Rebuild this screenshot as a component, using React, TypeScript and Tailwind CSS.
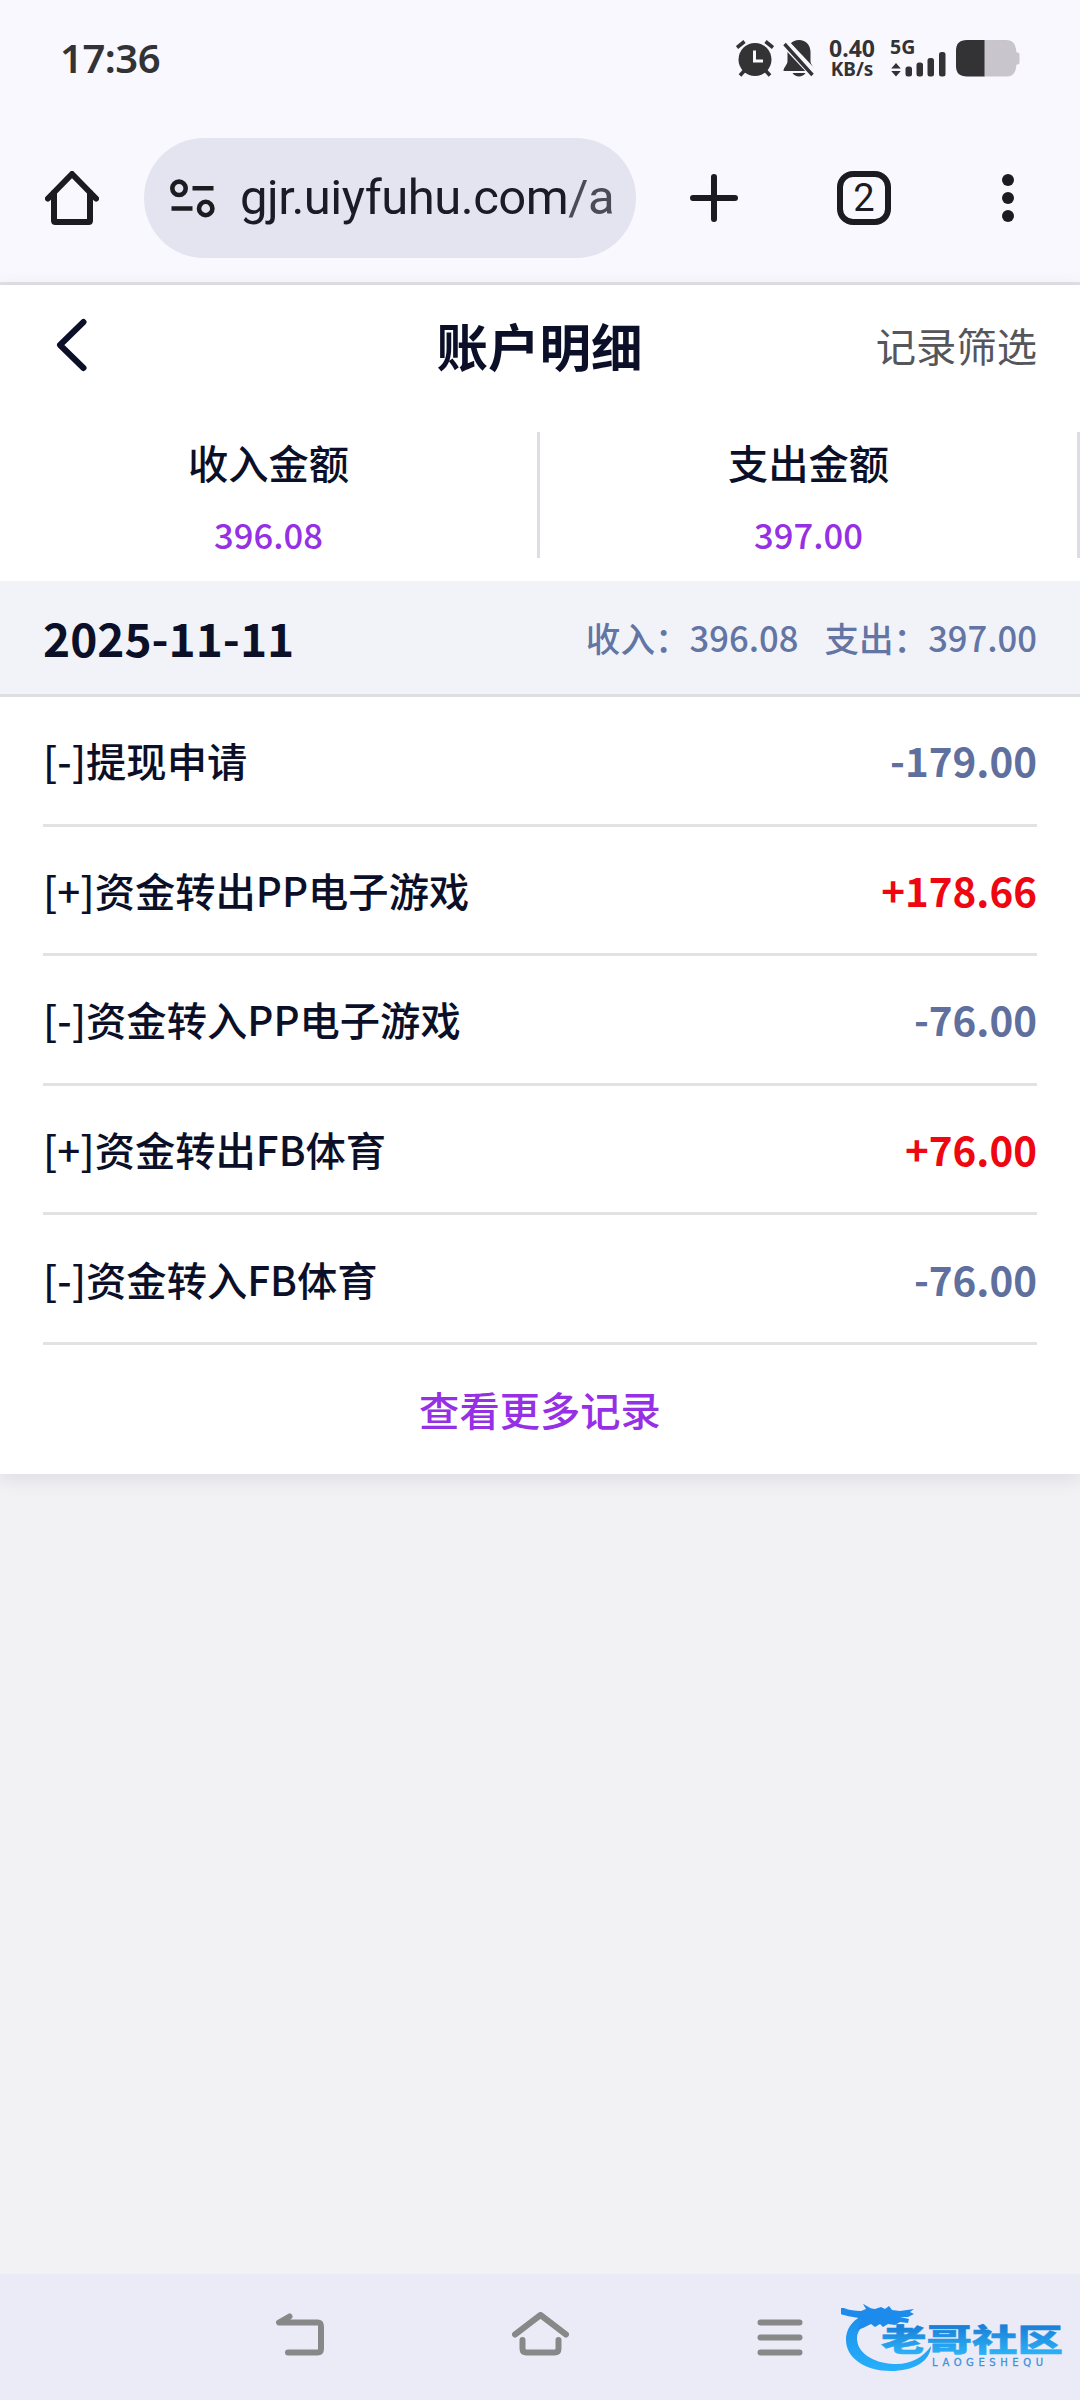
type RecordItem = {
  id: number;
  title: string;
  amount: string;
};

const records: RecordItem[] = [
  { id: 1, title: "[-]提现申请", amount: "-179.00" },
  { id: 2, title: "[+]资金转出PP电子游戏", amount: "+178.66" },
  { id: 3, title: "[-]资金转入PP电子游戏", amount: "-76.00" },
  { id: 4, title: "[+]资金转出FB体育", amount: "+76.00" },
  { id: 5, title: "[-]资金转入FB体育", amount: "-76.00" },
];

const totals = [
  { label: "收入金额", value: "396.08" },
  { label: "支出金额", value: "397.00" },
];

const StatusBar = () => (
  <div className="flex h-[120px] items-start justify-between px-[60px] pt-10 font-['Noto_Sans',sans-serif] text-[#333335]">
    <span className="-mt-[4px] text-[40px] font-semibold leading-[44px] tracking-[-0.5px]">17:36</span>
    <div className="flex items-start">
      {/* alarm */}
      <svg width="38" height="37" viewBox="0 0 38 37" fill="none" stroke="currentColor" strokeWidth="3.6">
        <circle cx="19" cy="19.5" r="16.5" fill="currentColor" stroke="none" />
        <path d="M1 7.5L8.5 1.5M37 7.5L29.5 1.5M4 35.5L9 30M34 35.5L29 30" />
        <path d="M18.5 10.5V21H27" stroke="#f9f8fe" strokeWidth="3" />
      </svg>
      {/* muted bell */}
      <svg className="ml-[9px]" width="32" height="37" viewBox="0 0 32 37" fill="currentColor">
        <path d="M16 0c7 0 11.500 5 11.500 12v9c0 4 4 6 4 10H.5c0-4 4-6 4-10v-9C4.500 5 9 0 16 0z" />
        <path d="M9.500 33h13c-2.500 4.500-10.500 4.500-13 0z" />
        <path d="M0 1L31 34" stroke="#f9f8fe" strokeWidth="8.500" />
        <path d="M1.500 4L29.500 35" stroke="currentColor" strokeWidth="3.400" />
      </svg>
      <div className="-mt-[3px] ml-[13px] flex w-12 flex-col items-center font-bold">
        <span className="text-[23px] leading-[22px]">0.40</span>
        <span className="text-[19px] leading-[20px]">KB/s</span>
      </div>
      {/* signal */}
      <div className="ml-[14px] flex h-[37px] w-[56px] items-end">
        <div className="-mt-px flex h-[38px] w-[15px] flex-col justify-between">
          <span className="-mt-[2px] text-[19.500px] font-bold leading-[20px]">5G</span>
          <svg width="12" height="15" viewBox="0 0 12 15" fill="currentColor">
            <path d="M6 1l4.800 5.500H1.200zM6 14.500l4.800-5.500H1.200z" />
          </svg>
        </div>
        <svg width="41" height="26" viewBox="0 0 41 26" fill="currentColor">
          <rect x="0.500" y="15.500" width="6.500" height="10" rx="2.500" />
          <rect x="11.500" y="11.500" width="6.500" height="14" rx="2.500" />
          <rect x="22.500" y="7" width="6.500" height="18.500" rx="2.500" />
          <rect x="34" y="1" width="6.500" height="24.500" rx="2.500" />
        </svg>
      </div>
      {/* battery */}
      <svg className="ml-[10px]" width="64" height="37" viewBox="0 0 64 37">
        <path d="M28 0h22c6 0 9 3 10 9l.5 3.500h1c1.500 0 2 1 2 2v8c0 1-.5 2-2 2h-1L60 28c-1 6-4 8.500-10 8.500H28z" fill="#c8c5cc" />
        <path d="M28.500 0v36.500H11C3.500 36.500 0 33 0 26V10.500C0 3.500 3.500 0 11 0z" fill="#333335" />
      </svg>
    </div>
  </div>
);

const BrowserBar = () => (
  <div className="flex h-[165px] items-start border-b-[3px] border-[#e2e1e7] pl-[45px] pt-[18px] text-[#1b1b21]">
    <svg className="mt-[33px]" width="54" height="54" viewBox="0 0 54 54" fill="none" stroke="currentColor" strokeWidth="6" strokeLinecap="round" strokeLinejoin="round">
      <path d="M3 27.500L27 3l24 24.500" />
      <path d="M9 22v27.500q0 1.500 1.500 1.500h33q1.500 0 1.500-1.500V22" />
    </svg>
    <div className="ml-[45px] flex h-[120px] w-[492px] items-center rounded-full bg-[#e4e4f0] pl-[26px]">
      <svg width="45" height="39" viewBox="0 0 45 39" fill="none" stroke="currentColor" strokeWidth="4.600">
        <circle cx="9" cy="9.300" r="6.700" />
        <path d="M22.500 9.300H43.500M1.500 29.500H22.500" />
        <circle cx="35.700" cy="29.500" r="6.700" />
      </svg>
      <div className="ml-[25px] whitespace-nowrap font-[Roboto,sans-serif] text-[49px] leading-[60px] tracking-[-0.5px] text-[#1b1b25]">
        gjr.uiyfuhu.com<span className="text-[#4b4a55]">/a</span>
      </div>
    </div>
    <svg className="ml-[54px] mt-9" width="48" height="48" viewBox="0 0 48 48" stroke="currentColor" strokeWidth="6" strokeLinecap="round">
      <path d="M24 3v42M3 24h42" />
    </svg>
    <div className="ml-[99px] mt-[33px] flex h-[54px] w-[54px] items-center justify-center rounded-2xl border-[6px] border-[#1b1b21] font-[Roboto,sans-serif] text-[38px] leading-none">
      2
    </div>
    <svg className="ml-[111px] mt-9" width="12" height="48" viewBox="0 0 12 48" fill="currentColor">
      <circle cx="6" cy="6" r="6" />
      <circle cx="6" cy="24" r="6" />
      <circle cx="6" cy="42" r="6" />
    </svg>
  </div>
);

const NavBar = () => (
  <div className="flex h-[126px] items-start bg-[#ebebf7] pl-[276px] pt-[38px] text-[#888889]">
    <svg width="49" height="45" viewBox="0 0 49 45" fill="none" stroke="currentColor" strokeWidth="6" strokeLinecap="round" strokeLinejoin="round">
      <path d="M13.500 4.500L3 10.500h38.500q3.500 0 3.500 4v22q0 4-3.500 4H12" />
      <path d="M12 7L6 10h6z" fill="currentColor" strokeWidth="2" />
    </svg>
    <svg className="ml-[187px]" width="57" height="45" viewBox="0 0 57 45" fill="none" stroke="currentColor" strokeWidth="6" strokeLinecap="round" strokeLinejoin="round">
      <path d="M3 22.500L28.500 3 54 22.500" />
      <path d="M10.500 28v8.500q0 4 4 4h28q4 0 4-4V28" />
    </svg>
    <svg className="ml-[188px]" width="46" height="45" viewBox="0 0 46 45" stroke="currentColor" strokeWidth="6" strokeLinecap="round">
      <path d="M3.500 10.500h39M3.500 25.500h39M3.500 40.500h39" />
    </svg>
    <svg className="-mt-2 ml-[38px]" width="224" height="72" viewBox="0 0 224 72">
      <defs>
        <linearGradient id="ring" x1="0" y1="0" x2="0" y2="1">
          <stop offset="0" stopColor="#1a8cec" />
          <stop offset="1" stopColor="#27b0fa" />
        </linearGradient>
        <linearGradient id="word" x1="0" y1="0" x2="0" y2="1">
          <stop offset="0.250" stopColor="#1a80d8" />
          <stop offset="0.900" stopColor="#2db4f8" />
        </linearGradient>
      </defs>
      {/* dragon body */}
      <path
        d="M32 8C14 12 5 23 5 36c0 18 19 31 45 31 22 0 39-9 40-25-8 12-22 19-37 18-21-1-37-11-37-26 0-9 9-17 23-21z"
        fill="url(#ring)"
      />
      {/* dragon head and whiskers */}
      <path
        d="M3 4c5 2.500 11 2.500 17 3l5-2-3-5c5 2 7 5 12 5l6-2 4 2 4-3 3 4 8 1 14-2-4 3 4 2-6 3-8 0 9 2-1 4-8-1-5 3-7-1-5 3-3-3-5 3-4-3-8 4-6 2 5-11c-6-2-12-2-18-4-3 0-5-2-6-7z"
        fill="#1c8bec"
      />
      <text
        x="40"
        y="47"
        fontSize="31"
        fontWeight="900"
        textLength="182"
        lengthAdjust="spacingAndGlyphs"
        fill="url(#word)"
        stroke="url(#word)"
        strokeWidth="0.500"
        className="font-['Noto_Sans_CJK_SC',sans-serif]"
      >
        老哥社区
      </text>
      <text x="91" y="61.500" fontSize="10" textLength="111" fill="#3c93dc" stroke="#3c93dc" strokeWidth="0.300" className="font-['DejaVu_Sans',sans-serif]">
        LAOGESHEQU
      </text>
    </svg>
  </div>
);

const App = () => {
  return (
    <div className="flex h-[2400px] w-[1080px] flex-col overflow-hidden bg-[#f2f2f4] font-['Noto_Sans_CJK_SC',sans-serif] text-[#0b1028]">
      <div className="bg-[#f9f8fe]">
        <StatusBar />
        <BrowserBar />
      </div>

      <div className="bg-white shadow-[0_4px_18px_rgba(80,85,130,0.14)]">
        <div className="flex h-[124px] items-center justify-between pb-1 pl-[56px] pr-[43px]">
          <div className="flex w-[147px]">
            <svg width="32" height="54" viewBox="0 0 32 54" fill="none" stroke="currentColor" strokeWidth="6" strokeLinecap="round" strokeLinejoin="round">
              <path d="M27.500 4L4 27l23.500 23" />
            </svg>
          </div>
          <h1 className="text-[51.500px] font-bold leading-none">账户明细</h1>
          <span className="text-[40.300px] leading-none text-[#55565c]">记录筛选</span>
        </div>

        <div className="flex h-[172px] pt-[23px]">
          {totals.map((item) => (
            <div key={item.label} className="flex h-[126px] flex-1 flex-col items-center border-r-[3px] border-[#dcdee6] pt-[10px]">
              <span className="text-[40.300px] font-medium leading-[40px]">{item.label}</span>
              <span className="mt-[34px] text-[34.600px] font-medium leading-[36px] text-[#9630e4]">{item.value}</span>
            </div>
          ))}
        </div>

        <div className="flex h-[116px] items-center justify-between border-b-[3px] border-[#dddee2] bg-[#f2f3f9] px-[43px]">
          <span className="-mt-[2px] text-[46px] font-bold leading-none">2025-11-11</span>
          <div className="flex gap-[26px] text-[34.600px] font-medium leading-none text-[#6375a4]">
            <span>收入：396.08</span>
            <span>支出：397.00</span>
          </div>
        </div>

        <div className="px-[43px]">
          {records.map((record) => (
            <div key={record.id} className="flex h-[129.600px] items-center justify-between border-b-[3px] border-[#e2e2e4]">
              <span className="text-[40.300px] font-medium leading-none">{record.title}</span>
              <span
                className={`text-[40.300px] font-bold leading-none ${
                  record.amount.startsWith("+") ? "text-[#ee0610]" : "text-[#5f6f9e]"
                }`}
              >
                {record.amount}
              </span>
            </div>
          ))}
          <div className="flex h-[129px] items-center justify-center text-[40.300px] font-medium leading-none text-[#9630e4]">
            查看更多记录
          </div>
        </div>
      </div>

      <div className="flex-1" />
      <NavBar />
    </div>
  );
};

export default App;
